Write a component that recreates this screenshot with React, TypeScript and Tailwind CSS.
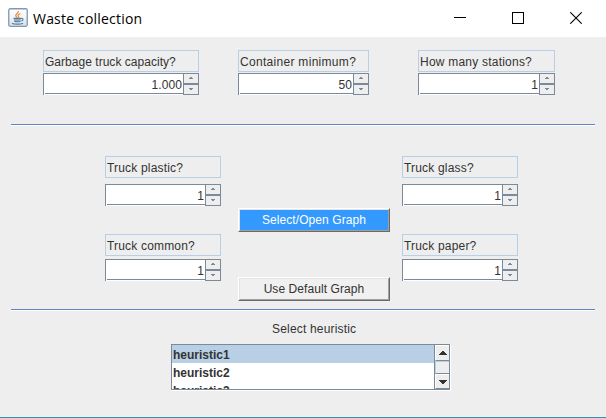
import type { ReactNode } from "react";

function Triangle({ up }: { up?: boolean }) {
  return (
    <svg width="4" height="2" viewBox="0 0 4 2" fill="#7a8a99" shapeRendering="crispEdges">
      {up ? <path d="M1 0h2v1h1v1H0V1h1z" /> : <path d="M0 0h4v1H3v1H1V1H0z" />}
    </svg>
  );
}

function Spinner({ value }: { value: string }) {
  return (
    <div className="flex h-[22px] w-full">
      <div className="flex h-[22px] min-w-0 flex-1 flex-col border-l border-t border-[#7a8a99] bg-white">
        <div className="flex h-[19px] items-center justify-end pr-px pt-[3px] text-[12px] leading-[14px] tracking-[0.1px]">
          {value}
        </div>
        <div className="ml-px h-px bg-[#7a8a99]" />
      </div>
      <div className="flex w-4 flex-col border border-[#7a8a99]">
        <div className="flex h-[9px] items-start pl-[5px] pt-[3px]">
          <Triangle up />
        </div>
        <div className="h-[2px] bg-[#7a8a99]" />
        <div className="flex h-[9px] items-start pl-[5px] pt-[3px]">
          <Triangle />
        </div>
      </div>
    </div>
  );
}

function Field({ label, value, width, gap, tracking }: { label: string; value: string; width: string; gap: string; tracking: string }) {
  return (
    <div className={`flex flex-col ${width} ${gap}`}>
      <div className={`h-[22px] whitespace-nowrap border border-[#b8cfe5] pl-px pt-[4px] text-[12px] leading-[14px] ${tracking}`}>
        {label}
      </div>
      <Spinner value={value} />
    </div>
  );
}

function Separator() {
  return <div className="mx-[11px] h-[2px] border-b border-t border-b-white border-t-[#6382bf]" />;
}

function GraphButton({ children, color }: { children: ReactNode; color: string }) {
  return (
    <button className="block h-6 w-[152px] border border-b-[#696969] border-l-white border-r-[#696969] border-t-white">
      <span className={`flex h-[22px] items-center justify-center whitespace-nowrap border border-b-[#a0a0a0] border-l-[#e3e3e3] border-r-[#a0a0a0] border-t-[#e3e3e3] text-[12px] leading-[14px] tracking-[0.08px] ${color}`}>
        {children}
      </span>
    </button>
  );
}

function JavaIcon() {
  return (
    <svg width="20" height="20" viewBox="0 0 20 20" fill="none">
      <defs>
        <linearGradient id="tile" x1="0" y1="0" x2="0" y2="1">
          <stop offset="0" stopColor="#fff" />
          <stop offset="0.5" stopColor="#f2f4f6" />
          <stop offset="1" stopColor="#d6dde4" />
        </linearGradient>
      </defs>
      <rect x="0.75" y="0.75" width="18.5" height="17.6" rx="1.5" fill="url(#tile)" stroke="#7c99b5" strokeWidth="1.3" />
      <path d="M10.3 3c.8 2-3 3-2.5 4.8.2.8 1 1.2 1.2 2M12.5 5.5c-1.8.8-2.8 1.5-2.2 2.6.5.8.6 1.1 0 1.8" stroke="#ee8b3a" strokeWidth="1.3" />
      <path d="M5.5 10h7.5l-.6 3.2c-1.6.7-4.4.7-6 0z" fill="#8fa9bf" />
      <path d="M5.5 10.4h7.5M6.3 13.2c2 .7 4.4.6 6.2 0M4 15.2c2 1.3 9 1.2 11 0M13 10.5c2.5-.6 2.8 1.8.3 2.5" stroke="#587f9f" strokeWidth="1.1" />
    </svg>
  );
}

function ListBox() {
  return (
    <div className="flex h-[47px] w-[280px] border-b border-r border-white">
      <div className="flex h-[46px] w-[279px] border border-[#7a8a99] bg-white">
        <div className="h-[44px] flex-1 overflow-hidden text-[12px] font-bold leading-[18px]">
          <div className="h-[18px] bg-[#b8cfe5] pl-px pt-px">heuristic1</div>
          <div className="h-[18px] pl-px pt-px">heuristic2</div>
          <div className="h-[18px] pl-px pt-px">heuristic3</div>
        </div>
        <div className="flex w-[15px] flex-col border-l border-[#7a8a99] bg-[#eee]">
          <div className="flex h-4 items-center justify-center border-b border-l border-t border-b-[#7a8a99] border-l-white border-t-white">
            <svg width="8" height="4" viewBox="0 0 8 4" fill="#333" shapeRendering="crispEdges">
              <path d="M3 0h2v1h1v1h1v1h1v1H0V3h1V2h1V1h1z" />
            </svg>
          </div>
          <div className="h-[13px] border-b border-l border-t border-b-[#7a8a99] border-l-[#b8cfe5] border-t-[#b8cfe5]" />
          <div className="flex h-[15px] items-center justify-center border-b border-l border-t border-b-[#7a8a99] border-l-white border-t-white">
            <svg width="8" height="4" viewBox="0 0 8 4" fill="#333" shapeRendering="crispEdges">
              <path d="M0 0h8v1H7v1H6v1H5v1H3V3H2V2H1V1H0z" />
            </svg>
          </div>
        </div>
      </div>
    </div>
  );
}

export default function App() {
  return (
    <div className="flex h-[418px] w-[606px] flex-col overflow-hidden border-b border-[#2b96b8] bg-[#eee] font-['Liberation_Sans',Arial,sans-serif] text-[#333]">
      <header className="flex h-[37px] shrink-0 items-start bg-white pl-2 pr-6 pt-2 text-black">
        <JavaIcon />
        <h1 className="ml-[5px] flex-1 whitespace-nowrap font-['Open_Sans','Noto_Sans',sans-serif] text-[14px] leading-[22px] tracking-[0.2px]">
          Waste collection
        </h1>
        <div className="flex items-center gap-[46px] pt-1">
          <svg width="12" height="12" viewBox="0 0 12 12" shapeRendering="crispEdges">
            <path d="M0 5h12v1H0z" />
          </svg>
          <svg width="12" height="12" viewBox="0 0 12 12" fill="none" stroke="#000" shapeRendering="crispEdges">
            <rect x="0.5" y="0.5" width="11" height="11" />
          </svg>
          <svg width="12" height="12" viewBox="0 0 12 12" fill="none" stroke="#000" strokeWidth="1.1">
            <path d="M.3.3l11.4 11.4M11.7.3L.3 11.7" />
          </svg>
        </div>
      </header>

      <section className="flex h-[87px] shrink-0 justify-between pl-[43px] pr-[51px] pt-[13px]">
        <Field label="Garbage truck capacity?" value="1.000" width="w-[156px]" gap="gap-px" tracking="tracking-[0.03px]" />
        <Field label="Container minimum?" value="50" width="w-[131px] -ml-[10px]" gap="gap-px" tracking="tracking-[0.3px]" />
        <Field label="How many stations?" value="1" width="w-[137px]" gap="gap-px" tracking="tracking-[0.22px]" />
      </section>

      <Separator />

      <section className="flex h-[183px] shrink-0 pl-[105px] pt-[30px]">
        <div className="flex w-[116px] flex-col gap-[28px]">
          <Field label="Truck plastic?" value="1" width="w-full" gap="gap-[6px]" tracking="tracking-[0.18px]" />
          <Field label="Truck common?" value="1" width="w-full" gap="gap-[3px]" tracking="tracking-[0.18px]" />
        </div>
        <div className="ml-[17px] mr-3 flex flex-col gap-[45px] pt-[52px]">
          <GraphButton color="bg-[#3399ff] text-white">Select/Open Graph</GraphButton>
          <GraphButton color="bg-[#f0f0f0]">Use Default Graph</GraphButton>
        </div>
        <div className="flex w-[116px] flex-col gap-[28px]">
          <Field label="Truck glass?" value="1" width="w-full" gap="gap-[6px]" tracking="tracking-[0.18px]" />
          <Field label="Truck paper?" value="1" width="w-full" gap="gap-[3px]" tracking="tracking-[0.18px]" />
        </div>
      </section>

      <Separator />

      <section className="flex flex-col pl-[171px] pt-[11px]">
        <div className="mb-[8px] ml-[101px] whitespace-nowrap text-[12px] leading-[14px] tracking-[0.18px]">Select heuristic</div>
        <ListBox />
      </section>
    </div>
  );
}
